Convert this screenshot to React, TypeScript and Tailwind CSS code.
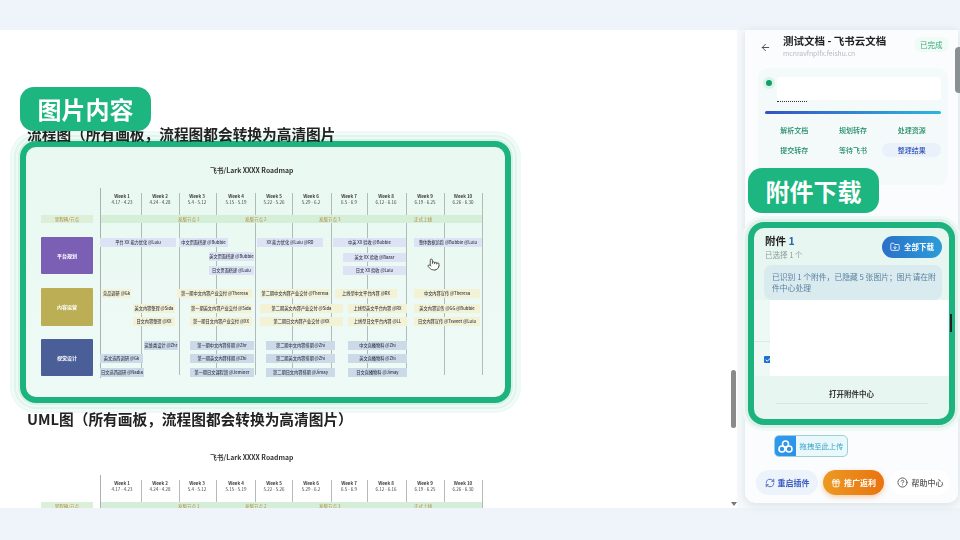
import { ArrowLeft, FolderDown, Gift, CircleHelp, RefreshCw, Check, Pointer } from "lucide-react";

const font = "font-['Noto_Sans_CJK_SC','Noto_Sans',sans-serif]";

type Bar = [number, number, number, string, string];

const weeks = [
  ["Week 1", "4.17 - 4.23", 122],
  ["Week 2", "4.24 - 4.28", 160],
  ["Week 3", "5.4 - 5.12", 197],
  ["Week 4", "5.15 - 5.19", 236],
  ["Week 5", "5.22 - 5.26", 274],
  ["Week 6", "5.29 - 6.2", 311],
  ["Week 7", "6.5 - 6.9", 349],
  ["Week 8", "6.12 - 6.16", 386],
  ["Week 9", "6.19 - 6.25", 425],
  ["Week 10", "6.26 - 6.30", 463],
] as const;

const lines = [141, 179, 216, 255, 292, 331, 367, 406, 444, 482];

const blue = "bg-[#dde3f5]";
const yellow = "bg-[#f3f2d5]";
const steel = "bg-[#ccd9e8]";

const bars: Bar[] = [
  [100, 176, 242, "平台 XX 能力优化 @Lulu", blue],
  [179, 228, 242, "中文页面搭建 @Bubble", blue],
  [209, 254, 256, "英文页面搭建 @Bubble", blue],
  [209, 254, 270, "日文页面搭建 @Lulu", blue],
  [257, 323, 242, "XX 能力优化 @Lulu @RD", blue],
  [333, 406, 242, "中英 XX 验收 @Bubble", blue],
  [343, 406, 257, "英文 XX 验收 @Bazar", blue],
  [343, 406, 270, "日文 XX 验收 @Lulu", blue],
  [414, 482, 242, "整体数据追踪 @Bubble @Lulu", blue],
  [102, 131, 293, "竞品调研 @Gk", yellow],
  [133, 175, 308, "英文内容整理 @Sida", yellow],
  [133, 175, 321, "日文内容整理 @XX", yellow],
  [177, 252, 293, "第一期中文内容产业交付 @Theresa", yellow],
  [190, 252, 308, "第一期英文内容产业交付 @Sida", yellow],
  [190, 252, 321, "第一期日文内容产业交付 @XX", yellow],
  [260, 330, 293, "第二期中文内容产业交付 @Theresa", yellow],
  [260, 343, 308, "第二期英文内容产业交付 @Sida", yellow],
  [260, 343, 321, "第二期日文内容产业交付 @XX", yellow],
  [335, 397, 293, "上线型中文平台内容 @RX", yellow],
  [348, 407, 308, "上线型英文平台内容 @RX", yellow],
  [348, 407, 321, "上线型日文平台内容 @LL", yellow],
  [414, 480, 293, "中文内容宣传 @Theresa", yellow],
  [414, 480, 308, "英文内容宣传 @GG @Bubble", yellow],
  [414, 480, 321, "日文内容宣传 @Tsweet @Lulu", yellow],
  [144, 178, 345, "运维类设计 @Zhr", steel],
  [190, 254, 345, "第一期中文内容排期 @Zhr", steel],
  [100, 143, 358, "英文选西调研 @Gk", steel],
  [190, 254, 358, "第一期英文内容排期 @Zhi", steel],
  [100, 144, 372, "日文选西调研 @Nadia", steel],
  [190, 254, 372, "第一期日文课程润 @Jeminer", steel],
  [266, 335, 345, "第二期中文内容排期 @Zhi", steel],
  [266, 335, 358, "第二期英文内容排期 @Zhi", steel],
  [266, 335, 372, "第二期日文内容排期 @Jimay", steel],
  [348, 407, 345, "中文直播物料 @Zhi", steel],
  [348, 407, 358, "英文直播物料 @Zhi", steel],
  [348, 407, 372, "日文直播物料 @Jimay", steel],
];

const groups = [
  { top: 237, h: 37, label: "平台规划", color: "bg-[#7a5fb5]" },
  { top: 288, h: 38, label: "内容运营", color: "bg-[#bcae55]" },
  { top: 339, h: 37, label: "视觉设计", color: "bg-[#4a5f98]" },
];

// chart coordinates below are page coordinates of the first copy; origin is (0,147)
function Roadmap({ tint }: { tint?: boolean }) {
  return (
    <div className="relative h-[250px] w-full shrink-0 blur-[0.3px]">
      {tint && <div className="absolute left-[26px] top-0 h-[250px] w-[479px] bg-gradient-to-b from-[#e9f8f1] to-[#eefaf6]" />}
      <p className="absolute left-[210px] top-[17px] text-[6.8px] font-semibold leading-3 text-[#333]">飞书/Lark XXXX Roadmap</p>
      <div className="absolute left-[100px] top-[41px] h-[190px] w-px bg-[#a9b2b0]" />
      {lines.map((x) => (
        <div key={x} className="absolute top-[46px] h-[182px] w-px bg-[#b3bbb9]" style={{ left: x }} />
      ))}
      {weeks.map(([w, d, x]) => (
        <div key={w} className="absolute top-[46px] w-[36px] text-center text-[4.5px] leading-[6px] text-[#444]" style={{ left: x - 18 }}>
          <p className="font-semibold">{w}</p>
          <p>{d}</p>
        </div>
      ))}
      <div className="absolute left-[41px] top-[68px] flex h-[8px] w-[52px] items-center justify-center bg-[#dcefd8] text-[4.5px] text-[#b08a3a]">里程碑/节点</div>
      <div className="absolute left-[101px] top-[68px] h-[8px] w-[381px] bg-[#d5eed8]">
        <span className="absolute left-[77px] top-0 text-[4.5px] leading-[8px] text-[#b08a3a]">发版节点 1</span>
        <span className="absolute left-[144px] top-0 text-[4.5px] leading-[8px] text-[#b08a3a]">发版节点 2</span>
        <span className="absolute left-[218px] top-0 text-[4.5px] leading-[8px] text-[#b08a3a]">发版节点 3</span>
        <span className="absolute left-[313px] top-0 text-[4.5px] leading-[8px] text-[#b08a3a]">正式上线</span>
      </div>
      {groups.map((g) => (
        <div
          key={g.label}
          className={`absolute left-[41px] flex w-[52px] items-center justify-center rounded-[1px] text-[5px] font-semibold text-white ${g.color}`}
          style={{ top: g.top - 147, height: g.h }}
        >
          {g.label}
        </div>
      ))}
      {bars.map(([x1, x2, cy, text, color]) => (
        <div
          key={text + x1}
          className={`absolute flex h-[9px] items-center justify-center overflow-hidden whitespace-nowrap text-[4.2px] font-medium text-[#3a4150] ${color}`}
          style={{ left: x1, width: x2 - x1, top: cy - 147 - 4.5 }}
        >
          {text}
        </div>
      ))}
    </div>
  );
}

function DragIcon() {
  return (
    <svg width="15" height="13" viewBox="0 0 15 13" fill="none" stroke="white" strokeWidth="1.6">
      <circle cx="7.5" cy="4" r="3" />
      <circle cx="4" cy="9" r="3" />
      <circle cx="11" cy="9" r="3" />
    </svg>
  );
}

export default function App() {
  return (
    <div className={`relative h-[540px] w-[960px] overflow-hidden bg-[#eef4fa] blur-[0.3px] ${font}`}>
      <div className="flex h-[478px] translate-y-[30px] bg-[#f6f9fa]">
        {/* doc */}
        <div className="relative w-[737px] shrink-0 overflow-hidden bg-white">
          <div className="pt-[94px]">
            <h2 className="relative z-10 h-[20px] pl-[27px] text-[14.7px] font-bold leading-[20px] text-[#222]">流程图（所有画板，流程图都会转换为高清图片</h2>
            <div className="mt-[3px]">
              <Roadmap tint />
            </div>
            <h2 className="relative z-10 mt-[12px] h-[20px] pl-[27px] text-[14.7px] font-bold leading-[20px] text-[#222]">UML图（所有画板，流程图都会转换为高清图片）</h2>
            <div className="mt-[5px]">
              <Roadmap />
            </div>
          </div>
          <div className="absolute left-[20px] top-[111px] h-[262px] w-[491px] rounded-[16px] border-[6px] border-[#1cb37e] shadow-[0_0_0_2px_#d8f1e7,0_0_0_4px_#eefaf5,0_0_0_6px_#dff4ec,0_0_0_8px_#f3fbf8,0_0_0_10px_#ecf9f4]" />
          <div className="absolute left-[20px] top-[57px] z-20 flex h-[44px] w-[131px] items-center justify-center rounded-[14px] bg-[#1db580] text-[24px] font-bold text-white">图片内容</div>
          <Pointer size={13} className="absolute left-[427px] top-[228px] fill-white text-[#333]" strokeWidth={1.5} />
          <div className="absolute left-[731px] top-[340px] h-[58px] w-[5px] rounded-full bg-[#8a8a8a]" />
          <div className="absolute bottom-[2px] left-[731px] size-0 border-x-[3px] border-t-[4px] border-x-transparent border-t-[#777]" />
        </div>

        {/* plugin panel */}
        <div className="relative ml-[8px] flex h-[473px] w-[213px] flex-col rounded-b-[10px] bg-[#fafcfd] shadow-[0_2px_8px_rgba(120,150,170,0.25)]">
          <div className="flex h-[36px] items-start pl-[15px] pt-[4px]">
            <ArrowLeft size={11} className="mr-[12px] mt-[8px] text-[#444]" />
            <div className="w-[125px]">
              <p className="text-[10.5px] font-bold leading-[14px] text-[#222]">测试文档 - 飞书云文档</p>
              <p className="text-[6.8px] leading-[10px] text-[#b3bcc0]">mcnravfnplfx.feishu.cn</p>
            </div>
            <span className="ml-[6px] mt-[3px] rounded-full bg-[#f0fbf5] px-[6px] py-[2px] text-[7.5px] leading-[11px] text-[#3aa77c]">已完成</span>
          </div>

          <div className="ml-[13px] mt-[2px] h-[117px] w-[190px] rounded-[10px] bg-[#f4faf9] px-[7px] pt-[9px]">
            <div className="relative flex h-[23px] items-start gap-[5px]">
              <span className="ml-[1px] mt-[3px] size-[6px] shrink-0 rounded-full bg-[#0f9f6a] shadow-[0_0_0_3px_#d9f3e7]" />
              <div className="h-[23px] flex-1 rounded bg-white" />
              <div className="absolute bottom-[-2px] left-[12px] h-[2px] w-[30px] border-b border-dotted border-[#333]" />
            </div>
            <div className="mt-[11px] h-[3px] rounded-full bg-gradient-to-r from-[#3451c4] to-[#2cb6e0]" />
            <div className="mt-[9px] grid grid-cols-3 gap-y-[6px] text-center text-[7px] font-medium leading-[14px] text-[#1f8a65]">
              <span>解析文档</span>
              <span>规划转存</span>
              <span>处理资源</span>
              <span>提交转存</span>
              <span>等待飞书</span>
              <span className="rounded-full bg-[#eaf1fb] text-[#3556b8]">整理结果</span>
            </div>
          </div>

          <div className="ml-[3px] mt-[37px] flex h-[203px] w-[207px] flex-col rounded-[16px] border-[6px] border-[#1cb37e] bg-[#e8f6f1] shadow-[0_0_0_3px_#dcefe9,0_0_0_6px_#eef8f5]">
            <div className="flex items-start justify-between pl-[11px] pr-[7px] pt-[5px]">
              <div>
                <p className="text-[10.5px] font-bold leading-[15px] text-[#222]">
                  附件 <span className="text-[#2a66b8]">1</span>
                </p>
                <p className="mt-[1px] text-[7.5px] leading-[11px] text-[#8a9a9a]">已选择 1 个</p>
              </div>
              <button type="button" className="mt-[3px] flex h-[22px] w-[60px] items-center justify-center gap-[4px] rounded-full bg-gradient-to-r from-[#2a70c8] to-[#2d9cd8] text-[7.5px] font-semibold text-white">
                <FolderDown size={10} />
                全部下载
              </button>
            </div>
            <div className="ml-[10px] mr-[7px] mt-[5px] h-[35px] rounded-[8px] bg-[#d9ebef] py-[6px] pl-[8px] pr-[5px] text-[7.8px] leading-[11px] text-[#5a7fa0]">
              已识别 1 个附件，已隐藏 5 张图片；图片请在附件中心处理
            </div>
            <div className="relative flex h-[76px] bg-[#eef8f5]">
              <div className="absolute left-0 right-0 top-[41px] h-px bg-[#dfeae7]" />
              <div className="ml-[10px] mt-[56px] flex size-[7px] items-center justify-center rounded-[1px] bg-[#1d6fd0]">
                <Check size={6} strokeWidth={4} className="text-white" />
              </div>
              <div className="absolute bottom-0 left-[16px] right-0 top-0 bg-white" />
              <div className="absolute right-[-3px] top-[14px] h-[18px] w-[2px] bg-[#222]" />
            </div>
            <div className="flex flex-1 flex-col items-center">
              <p className="mt-[12px] text-[7.5px] font-semibold leading-[12px] text-[#333]">打开附件中心</p>
              <div className="mt-[3px] h-px w-[152px] bg-[#d3e6df]" />
            </div>
          </div>

          <div className="ml-[29px] mt-[10px] flex h-[22px] w-[74px] overflow-hidden rounded-[5px] border border-[#9ccfd6] bg-[#e8f8fb]">
            <div className="flex w-[21px] items-center justify-center bg-gradient-to-br from-[#2b9cf0] to-[#2f8fe8]">
              <DragIcon />
            </div>
            <span className="flex-1 text-center text-[7.3px] leading-[20px] text-[#3aa0c8]">拖拽至此上传</span>
          </div>

          <div className="mt-[13px] flex items-center gap-[5px] pl-[11px]">
            <div className="flex h-[25px] w-[62px] items-center justify-center gap-[3px] rounded-full bg-[#edf3fb] text-[8px] font-semibold text-[#3a5cc0]">
              <RefreshCw size={10} />
              重启插件
            </div>
            <div className="flex h-[25px] w-[61px] items-center justify-center gap-[3px] rounded-full bg-gradient-to-r from-[#ec9a22] to-[#e9730f] text-[8px] font-semibold text-white shadow-[0_2px_5px_rgba(233,120,20,0.35)]">
              <Gift size={10} />
              推广返利
            </div>
            <div className="ml-[1px] flex h-[25px] w-[60px] items-center justify-center gap-[4px] rounded-full bg-white text-[8px] font-medium text-[#555]">
              <CircleHelp size={11} />
              帮助中心
            </div>
          </div>

          <div className="absolute left-[3px] top-[138px] flex h-[45px] w-[131px] items-center justify-center rounded-[14px] bg-[#1db580] text-[24px] font-bold text-white">附件下载</div>
          <div className="absolute right-[-2px] top-[17px] h-[46px] w-[5px] rounded-l bg-[#8a8f92]" />
        </div>
      </div>
    </div>
  );
}
